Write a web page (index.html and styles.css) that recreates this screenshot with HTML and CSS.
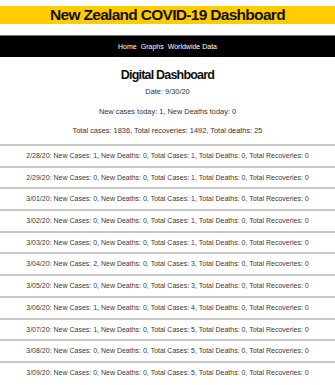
FILE: index.html
```html
<!DOCTYPE html>
<html>
<head>
<meta charset="utf-8">
<link rel="stylesheet" href="styles.css">
</head>
<body>
<h1 class="banner">New Zealand COVID-19 Dashboard</h1>
<nav class="nav"><span class="nav-link">Home</span><span class="nav-link">Graphs</span><span class="nav-link">Worldwide Data</span></nav>
<main class="main">
<h2 class="title">Digital Dashboard</h2>
<p class="info">Date: 9/30/20</p>
<p class="info">New cases today: 1, New Deaths today: 0</p>
<p class="info">Total cases: 1836, Total recoveries: 1492, Total deaths: 25</p>
<ul class="rows">
<li>2/28/20: New Cases: 1, New Deaths: 0, Total Cases: 1, Total Deaths: 0, Total Recoveries: 0</li>
<li>2/29/20: New Cases: 0, New Deaths: 0, Total Cases: 1, Total Deaths: 0, Total Recoveries: 0</li>
<li>3/01/20: New Cases: 0, New Deaths: 0, Total Cases: 1, Total Deaths: 0, Total Recoveries: 0</li>
<li>3/02/20: New Cases: 0, New Deaths: 0, Total Cases: 1, Total Deaths: 0, Total Recoveries: 0</li>
<li>3/03/20: New Cases: 0, New Deaths: 0, Total Cases: 1, Total Deaths: 0, Total Recoveries: 0</li>
<li>3/04/20: New Cases: 2, New Deaths: 0, Total Cases: 3, Total Deaths: 0, Total Recoveries: 0</li>
<li>3/05/20: New Cases: 0, New Deaths: 0, Total Cases: 3, Total Deaths: 0, Total Recoveries: 0</li>
<li>3/06/20: New Cases: 1, New Deaths: 0, Total Cases: 4, Total Deaths: 0, Total Recoveries: 0</li>
<li>3/07/20: New Cases: 1, New Deaths: 0, Total Cases: 5, Total Deaths: 0, Total Recoveries: 0</li>
<li>3/08/20: New Cases: 0, New Deaths: 0, Total Cases: 5, Total Deaths: 0, Total Recoveries: 0</li>
<li>3/09/20: New Cases: 0, New Deaths: 0, Total Cases: 5, Total Deaths: 0, Total Recoveries: 0</li>
</ul>
</main>
</body>
</html>
```
FILE: styles.css
```css
html, body {
  margin: 0;
  padding: 0;
  background: #fff;
  font-family: "Liberation Sans", Arial, sans-serif;
  overflow: hidden;
}
.banner {
  margin: 6px 0 0;
  height: 18px;
  line-height: 18px;
  background: #ffcc00;
  color: #111;
  font-size: 15.5px;
  letter-spacing: -0.7px;
  font-weight: bold;
  text-align: center;
}
.nav {
  margin-top: 11px;
  height: 21px;
  background: #000;
  border-top: 1px solid #777;
  display: flex;
  justify-content: center;
  align-items: center;
  gap: 4px;
}
.nav-link {
  color: #fff;
  font-size: 7px;
}
.main {
  text-align: center;
  color: #333;
}
.title {
  margin: 10px 0 0;
  font-size: 12.5px;
  letter-spacing: -0.8px;
  line-height: 16px;
  color: #111;
}
.info {
  margin: 11.5px 0 0;
  font-size: 7.4px;
  line-height: 8px;
}
.info:first-of-type {
  margin-top: 5px;
}
.rows {
  list-style: none;
  margin: 9px 0 0;
  padding: 0;
}
.rows li {
  border-top: 2px solid #c8c8c8;
  height: 19.7px;
  line-height: 19.7px;
  font-size: 7px;
  color: #3a3a3a;
}
```
